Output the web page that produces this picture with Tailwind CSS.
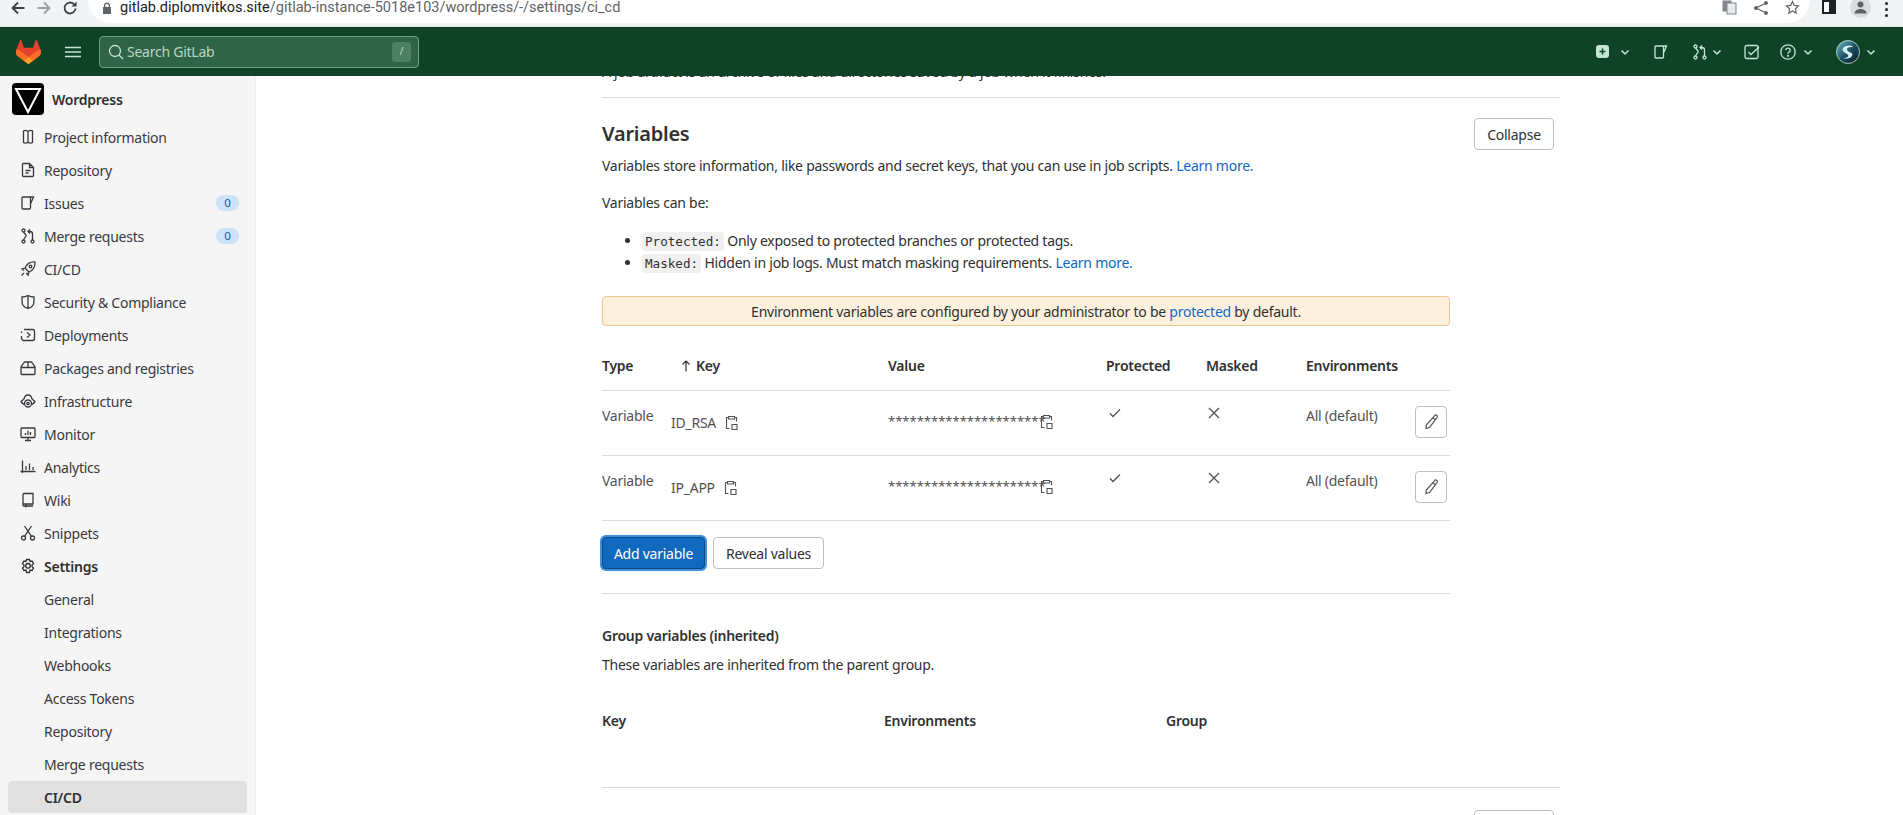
<!DOCTYPE html>
<html lang="en">
<head>
    <meta charset="UTF-8">
    <title>CI/CD Settings · Wordpress · GitLab</title>
    <script src="https://cdn.jsdelivr.net/npm/@tailwindcss/browser@4"></script>
</head>
<body class="h-[815px] overflow-hidden bg-white font-['Noto_Sans',sans-serif] text-[14px] tracking-[-0.25px] text-[#303030]">
    <!-- Browser toolbar -->
    <div class="flex h-[27px] items-start overflow-hidden bg-[#f1f3f4] border-b border-[#dfe7df]">
        <div class="flex w-[88px] items-center gap-[10px] pl-[10px] pt-0 text-[#3c4043]">
            <svg width="16" height="16" viewBox="0 0 16 16" fill="none" stroke="#3c4043" stroke-width="1.8"><path d="M14.5 8H2.5M8 2.5 2.5 8 8 13.5"/></svg>
            <svg width="16" height="16" viewBox="0 0 16 16" fill="none" stroke="#9aa0a6" stroke-width="1.8"><path d="M1.5 8h12M8 2.5 13.5 8 8 13.5"/></svg>
            <svg width="16" height="16" viewBox="0 0 16 16" fill="none" stroke="#3c4043" stroke-width="1.8"><path d="M13.5 8.5a5.5 5.5 0 1 1-1.6-4.4"/><path fill="#3c4043" stroke="none" d="M14.5 1.5v5h-5z"/></svg>
        </div>
        <div class="ml-[0px] flex h-[23px] w-[1722px] items-center rounded-b-full bg-white pl-[14px] pb-[8px] font-['Roboto',sans-serif] text-[14.5px] tracking-normal">
            <svg class="mr-[8px]" width="10" height="12" viewBox="0 0 10 12" fill="#5f6368"><path d="M2 5V3.5a3 3 0 0 1 6 0V5h1v7H1V5zm1.3 0h3.4V3.5a1.7 1.7 0 0 0-3.4 0z"/></svg>
            <span class="text-[#202124]">gitlab.diplomvitkos.site</span><span class="text-[#5f6368]">/gitlab-instance-5018e103/wordpress/-/settings/ci_cd</span>
            <div class="ml-auto mr-[0px] flex items-center gap-[17px] pr-[10px] pb-0">
                <svg width="15" height="15" viewBox="0 0 15 15"><rect x="0.5" y="0.5" width="9" height="11" fill="#80868b"/><rect x="5" y="3" width="9" height="11" fill="#e8eaed" stroke="#80868b"/></svg>
                <svg width="14" height="14" viewBox="0 0 14 14" fill="none" stroke="#5f6368" stroke-width="1.3"><path d="M12 2 2 7l10 5"/><circle cx="12" cy="2" r="1.3" fill="#5f6368"/><circle cx="2" cy="7" r="1.3" fill="#5f6368"/><circle cx="12" cy="12" r="1.3" fill="#5f6368"/></svg>
                <svg width="15" height="15" viewBox="0 0 15 15" fill="none" stroke="#5f6368" stroke-width="1.2"><path d="m7.5 1.5 1.8 3.9 4.2.5-3.1 2.9.8 4.2-3.7-2.1-3.7 2.1.8-4.2L1.5 5.9l4.2-.5z"/></svg>
            </div>
        </div>
        <div class="flex flex-1 items-start gap-[14px] pl-[12px]">
            <div class="h-[14px] w-[14px] border-[2px] border-[#202124] bg-[linear-gradient(90deg,#fff_50%,#202124_50%)]"></div>
            <div class="-mt-[3px] flex h-[21px] w-[21px] items-center justify-center rounded-full bg-[#dadce0]">
                <svg width="13" height="13" viewBox="0 0 13 13" fill="#5f6368"><circle cx="6.5" cy="3.5" r="3"/><path d="M0.5 12.5c0-3 3-4.5 6-4.5s6 1.500 6 4.500z"/></svg>
            </div>
            <div class="flex flex-col gap-[3px] pt-[2px]"><span class="h-[3px] w-[3px] rounded-full bg-[#202124]"></span><span class="h-[3px] w-[3px] rounded-full bg-[#202124]"></span><span class="h-[3px] w-[3px] rounded-full bg-[#202124]"></span></div>
        </div>
    </div>

    <!-- GitLab navbar -->
    <header class="flex h-[49px] items-center bg-[#0e4328] pl-[16px] text-[#c5e6d3]">
        <svg width="25" height="24" viewBox="0 0 25 24"><path d="m24.507 9.5-.034-.09L21.082.562a.896.896 0 0 0-1.694.091l-2.29 7.01H7.825L5.535.653a.898.898 0 0 0-1.694-.09L.451 9.411.416 9.5a6.297 6.297 0 0 0 2.09 7.278l.012.01.03.022 5.16 3.867 2.56 1.935 1.554 1.176a1.051 1.051 0 0 0 1.268 0l1.555-1.176 2.56-1.935 5.197-3.89.014-.01A6.297 6.297 0 0 0 24.507 9.5Z" fill="#E24329"/><path d="m24.507 9.5-.034-.09a11.44 11.44 0 0 0-4.56 2.051l-7.447 5.632 4.742 3.584 5.197-3.89.014-.01A6.297 6.297 0 0 0 24.507 9.5Z" fill="#FC6D26"/><path d="m7.707 20.677 2.56 1.935 1.555 1.176a1.051 1.051 0 0 0 1.268 0l1.555-1.176 2.56-1.935-4.743-3.584-4.755 3.584Z" fill="#FCA326"/><path d="M5.01 11.461a11.43 11.43 0 0 0-4.56-2.05L.416 9.5a6.297 6.297 0 0 0 2.09 7.278l.012.01.03.022 5.16 3.867 4.745-3.584-7.444-5.632Z" fill="#FC6D26"/></svg>
        <svg class="ml-[24px]" width="16" height="16" viewBox="0 0 16 16" fill="none" stroke="#c5e6d3" stroke-width="1.5"><path d="M0 3.500h16M0 8h16M0 12.500h16"/></svg>
        <div class="ml-[18px] flex h-[32px] w-[320px] items-center rounded-[4px] border border-[#6f9f84] bg-[#2f6448] pl-[8px] pr-[7px] text-[#b6d6c3]">
            <svg width="16" height="16" viewBox="0 0 16 16" fill="none" stroke="#c5e6d3" stroke-width="1.3"><circle cx="7" cy="7" r="5.5"/><path d="m11 11 4 4"/></svg>
            <span class="ml-[3px]">Search GitLab</span>
            <span class="ml-auto flex h-[20px] w-[19px] items-center justify-center rounded-[3px] bg-[#4d7f63] text-[11px]">/</span>
        </div>
        <div class="ml-auto flex items-center">
            <svg width="13" height="13" viewBox="0 0 13 13"><rect width="13" height="13" rx="3" fill="#c5e6d3"/><path d="M6.500 3.500v6M3.500 6.500h6" stroke="#0e4328" stroke-width="1.600"/></svg>
            <svg class="ml-[11px]" width="10" height="10" viewBox="0 0 10 10" fill="none" stroke="#c5e6d3" stroke-width="1.500"><path d="m1.500 3.500 3.500 3.500 3.500-3.500"/></svg>
            <svg class="ml-[23px]" width="16" height="16" viewBox="0 0 16 16" fill="none" stroke="#c5e6d3" stroke-width="1.300"><path d="M10.500 2H3a1 1 0 0 0-1 1v10a1 1 0 0 0 1 1h6.500a1 1 0 0 0 1-1V2l3 0-2.500 6"/></svg>
            <svg class="ml-[23px]" width="16" height="16" viewBox="0 0 16 16" fill="none" stroke="#c5e6d3" stroke-width="1.300"><circle cx="3.500" cy="2.500" r="1.500"/><circle cx="3.500" cy="13.500" r="1.500"/><circle cx="12.500" cy="13.500" r="1.500"/><path d="M3.500 4 6 7v1L3.500 12M12.500 12V6c0-1.500-1-2.500-2.500-2.500H8M10 1.500 8 3.500l2 2"/></svg>
            <svg class="ml-[4px]" width="10" height="10" viewBox="0 0 10 10" fill="none" stroke="#c5e6d3" stroke-width="1.500"><path d="m1.500 3.500 3.500 3.500 3.500-3.500"/></svg>
            <svg class="ml-[22px]" width="16" height="16" viewBox="0 0 16 16" fill="none" stroke="#c5e6d3" stroke-width="1.300"><rect x="1" y="1.500" width="13" height="13" rx="1.500"/><path d="m4.500 8 2.500 2.500L15 3"/></svg>
            <svg class="ml-[20px]" width="16" height="16" viewBox="0 0 16 16" fill="none" stroke="#c5e6d3" stroke-width="1.300"><circle cx="8" cy="8" r="7.200"/><path d="M5.800 6.200C5.800 5 6.800 4.200 8 4.200s2.200.8 2.200 2c0 1.800-2.200 1.700-2.200 3.500"/><circle cx="8" cy="11.800" r=".5"/></svg>
            <svg class="ml-[7px]" width="10" height="10" viewBox="0 0 10 10" fill="none" stroke="#c5e6d3" stroke-width="1.500"><path d="m1.500 3.500 3.500 3.500 3.500-3.500"/></svg>
            <svg class="ml-[23px]" width="24" height="24" viewBox="0 0 24 24"><defs><linearGradient id="av" x1="0" y1="0" x2="1" y2="1"><stop offset="0" stop-color="#6fc0cf"/><stop offset=".55" stop-color="#17495c"/><stop offset="1" stop-color="#0c1a22"/></linearGradient></defs><circle cx="12" cy="12" r="11.500" fill="url(#av)" stroke="#c5e6d3" stroke-width=".8"/><path d="M7 8c3-3 8-3 10-1-3 0-7 .5-6 3 2 3 7 2 5 6-2 3-7 3-9 2 3 0 6-1 5-3-1-2-7-3-5-7z" fill="#d6eef5"/></svg>
            <svg class="ml-[6px] mr-[27px]" width="10" height="10" viewBox="0 0 10 10" fill="none" stroke="#c5e6d3" stroke-width="1.500"><path d="m1.500 3.500 3.500 3.500 3.500-3.500"/></svg>
        </div>
    </header>

    <div class="flex h-[739px]">
        <!-- Sidebar -->
        <aside class="h-full w-[256px] shrink-0 overflow-hidden border-r border-[#ececec] bg-[#f5f5f5] pl-[8px] pr-[8px] pt-[7px] text-[#3a383f]">
            <div class="mb-[6px] flex h-[32px] items-center pl-[4px]">
                <svg width="32" height="32" viewBox="0 0 32 32"><rect width="32" height="32" rx="4" fill="#000"/><path d="M4 6h24L16 29z" fill="none" stroke="#fff" stroke-width="2"/></svg>
                <span class="ml-[8px] font-semibold text-[#303030]">Wordpress</span>
            </div>
            <nav class="flex flex-col gap-[1px]">
                <a class="flex h-[32px] items-center gap-[8px] pl-[12px]"><svg class="shrink-0" width="16" height="16" viewBox="0 0 16 16" fill="none" stroke="#3a383f" stroke-width="1.300"><path d="M8 2.500C6.500 1.500 4.500 1.300 3.500 2v11.500c1 .8 3 .7 4.500-.2zM8 2.500c1-1 2.800-1.300 4.500-.7v11.700c-1.700.7-3.500.6-4.500-.2"/></svg>Project information</a>
                <a class="flex h-[32px] items-center gap-[8px] pl-[12px]"><svg class="shrink-0" width="16" height="16" viewBox="0 0 16 16" fill="none" stroke="#3a383f" stroke-width="1.300"><path d="M9.500 1.500H3.500a1 1 0 0 0-1 1v11a1 1 0 0 0 1 1h9a1 1 0 0 0 1-1V5.500zM9.500 1.500v4h4M5.500 8.500h5M5.500 11h3"/></svg>Repository</a>
                <a class="flex h-[32px] items-center gap-[8px] pl-[12px]"><svg class="shrink-0" width="16" height="16" viewBox="0 0 16 16" fill="none" stroke="#3a383f" stroke-width="1.300"><path d="M10.500 2H3a1 1 0 0 0-1 1v10a1 1 0 0 0 1 1h6.500a1 1 0 0 0 1-1V2l3 0-2.500 6"/></svg>Issues<span class="ml-auto mr-[8px] flex h-[16px] w-[23px] items-center justify-center rounded-full bg-[#cbe2f9] text-[11.500px] text-[#0b5cad]">0</span></a>
                <a class="flex h-[32px] items-center gap-[8px] pl-[12px]"><svg class="shrink-0" width="16" height="16" viewBox="0 0 16 16" fill="none" stroke="#3a383f" stroke-width="1.300"><circle cx="3.500" cy="2.500" r="1.500"/><circle cx="3.500" cy="13.500" r="1.500"/><circle cx="12.500" cy="13.500" r="1.500"/><path d="M3.500 4 6 7v1L3.500 12M12.500 12V6c0-1.500-1-2.500-2.500-2.500H8M10 1.500 8 3.500l2 2"/></svg>Merge requests<span class="ml-auto mr-[8px] flex h-[16px] w-[23px] items-center justify-center rounded-full bg-[#cbe2f9] text-[11.500px] text-[#0b5cad]">0</span></a>
                <a class="flex h-[32px] items-center gap-[8px] pl-[12px]"><svg class="shrink-0" width="16" height="16" viewBox="0 0 16 16" fill="none" stroke="#3a383f" stroke-width="1.300"><path d="M15 1c-4.500-.3-8 1.500-10 6l4 4c4.500-2 6.300-5.500 6-10zM5 7 2 8l2 1.500M9 11l-1 3-1.500-2M4 12l-2.500 2.500"/><circle cx="10.500" cy="5.500" r="1.300"/></svg>CI/CD</a>
                <a class="flex h-[32px] items-center gap-[8px] pl-[12px]"><svg class="shrink-0" width="16" height="16" viewBox="0 0 16 16" fill="none" stroke="#3a383f" stroke-width="1.300"><path d="M8 1.500c2 1 4 1.500 6 1.500v4.500c0 3.500-2.500 6-6 7-3.500-1-6-3.500-6-7V3c2 0 4-.5 6-1.500zM8 1.500v13"/></svg>Security &amp; Compliance</a>
                <a class="flex h-[32px] items-center gap-[8px] pl-[12px]"><svg class="shrink-0" width="16" height="16" viewBox="0 0 16 16" fill="none" stroke="#3a383f" stroke-width="1.300"><path d="M4 2.500h8.500a2 2 0 0 1 2 2v7a2 2 0 0 1-2 2H4a2.500 2.500 0 0 1-2.500-2.500V9M1.500 6V4.500M7 5.500 10 8l-3 2.500"/></svg>Deployments</a>
                <a class="flex h-[32px] items-center gap-[8px] pl-[12px]"><svg class="shrink-0" width="16" height="16" viewBox="0 0 16 16" fill="none" stroke="#3a383f" stroke-width="1.300"><path d="M4.500 2h7L15 7v6.500a1 1 0 0 1-1 1H2a1 1 0 0 1-1-1V7zM1 7.500h14M8 2v5.500"/></svg>Packages and registries</a>
                <a class="flex h-[32px] items-center gap-[8px] pl-[12px]"><svg class="shrink-0" width="16" height="16" viewBox="0 0 16 16" fill="none" stroke="#3a383f" stroke-width="1.300"><path d="M4 11H3L1 8.500 4 6c.5-2.500 2-4 4-4s3.500 1.500 4 4l3 2.500L13 11h-1"/><circle cx="8" cy="10.500" r="3.500"/><circle cx="8" cy="10.500" r="1.200"/></svg>Infrastructure</a>
                <a class="flex h-[32px] items-center gap-[8px] pl-[12px]"><svg class="shrink-0" width="16" height="16" viewBox="0 0 16 16" fill="none" stroke="#3a383f" stroke-width="1.300"><rect x="1" y="2" width="14" height="9.500" rx="1"/><path d="M5 14.500h6M8 11.500v3M5.500 9V7M8 9V4.500M10.500 9V6"/></svg>Monitor</a>
                <a class="flex h-[32px] items-center gap-[8px] pl-[12px]"><svg class="shrink-0" width="16" height="16" viewBox="0 0 16 16" fill="none" stroke="#3a383f" stroke-width="1.300"><path d="M2.500 1.500V14M.5 12.500h15M6 11V7M9.500 11V4.500M13 11V8"/></svg>Analytics</a>
                <a class="flex h-[32px] items-center gap-[8px] pl-[12px]"><svg class="shrink-0" width="16" height="16" viewBox="0 0 16 16" fill="none" stroke="#3a383f" stroke-width="1.300"><path d="M3 13V2.500a1 1 0 0 1 1-1h9v10.500H4a1 1 0 0 0-1 1 1 1 0 0 0 1 1h9M6 12v3.500"/></svg>Wiki</a>
                <a class="flex h-[32px] items-center gap-[8px] pl-[12px]"><svg class="shrink-0" width="16" height="16" viewBox="0 0 16 16" fill="none" stroke="#3a383f" stroke-width="1.300"><circle cx="3.500" cy="13" r="2"/><circle cx="12.500" cy="13" r="2"/><path d="M4.500 1 11.500 11.300M11.500 1 4.500 11.300"/></svg>Snippets</a>
                <a class="flex h-[32px] items-center gap-[8px] pl-[12px] font-semibold text-[#303030]"><svg class="shrink-0" width="16" height="16" viewBox="0 0 16 16" fill="none" stroke="#303030" stroke-width="1.300"><path d="M6.500 1h3l.5 2 2-.5 1.500 2.500-1.500 1.500v1.500L13.500 9.500 12 12l-2-.5-.5 2.500h-3L6 11.500 4 12 2.500 9.500 4 8V6.500L2.500 5 4 2.500l2 .5z" transform="translate(0 .5)"/><circle cx="8" cy="7.800" r="2.300"/></svg>Settings</a>
                <a class="flex h-[32px] items-center pl-[36px]">General</a>
                <a class="flex h-[32px] items-center pl-[36px]">Integrations</a>
                <a class="flex h-[32px] items-center pl-[36px]">Webhooks</a>
                <a class="flex h-[32px] items-center pl-[36px]">Access Tokens</a>
                <a class="flex h-[32px] items-center pl-[36px]">Repository</a>
                <a class="flex h-[32px] items-center pl-[36px]">Merge requests</a>
                <a class="flex h-[32px] items-center rounded-[4px] bg-[#e1e1e1] pl-[36px] font-semibold text-[#303030]">CI/CD</a>
            </nav>
        </aside>

        <!-- Page content -->
        <main class="h-full w-[1304px] overflow-hidden pl-[346px]">
            <div class="w-[958px]">
                <p class="-mt-[14px] mb-[15px] leading-[20px]">A job artifact is an archive of files and directories saved by a job when it finishes.</p>

                <section class="border-t border-[#dcdcde]">
                    <div class="mt-[20px] flex h-[32px] items-center justify-between pr-[6px]">
                        <h2 class="text-[20px] font-semibold text-[#303030]">Variables</h2>
                        <button class="h-[32px] w-[80px] rounded-[4px] border border-[#bfbfc3] bg-white">Collapse</button>
                    </div>
                    <p class="mt-[6px] leading-[20px]">Variables store information, like passwords and secret keys, that you can use in job scripts. <a class="text-[#1068bf]">Learn more.</a></p>
                    <p class="mt-[17px] leading-[20px]">Variables can be:</p>
                    <ul class="mt-[17px] list-disc pl-[40px] leading-[21px]">
                        <li><code class="rounded-[4px] bg-[#f0f0f0] px-[3px] py-[2px] font-['DejaVu_Sans_Mono',monospace] text-[12.600px] tracking-normal">Protected:</code> Only exposed to protected branches or protected tags.</li>
                        <li><code class="rounded-[4px] bg-[#f0f0f0] px-[3px] py-[2px] font-['DejaVu_Sans_Mono',monospace] text-[12.600px] tracking-normal">Masked:</code> Hidden in job logs. Must match masking requirements. <a class="text-[#1068bf]">Learn more.</a></li>
                    </ul>

                    <div class="mt-[22px] flex h-[30px] w-[848px] items-center justify-center rounded-[4px] border border-[#e9c88c] bg-[#fdf1dd]">
                        <span>Environment variables are configured by your administrator to be <a class="text-[#1068bf]">protected</a> by default.</span>
                    </div>

                    <!-- Variables table -->
                    <div class="w-[848px]">
                        <div class="flex h-[65px] items-center border-b border-[#dcdcde] pt-[15px] font-semibold text-[#303030]">
                            <div class="w-[74px]">Type</div>
                            <div class="flex w-[212px] items-center gap-[5px] pl-[5px]"><svg width="10" height="12" viewBox="0 0 10 12" fill="none" stroke="#303030" stroke-width="1.200"><path d="M5 11.500V1M1.500 4.500 5 1l3.500 3.500"/></svg>Key</div>
                            <div class="w-[218px]">Value</div>
                            <div class="w-[100px]">Protected</div>
                            <div class="w-[100px]">Masked</div>
                            <div>Environments</div>
                        </div>
                        <div class="flex h-[65px] items-start border-b border-[#dcdcde] text-[#525252]">
                            <div class="w-[69px] pt-[14px]">Variable</div>
                            <div class="flex w-[217px] items-center gap-[9px] pt-[21px]">ID_RSA<svg width="13" height="16" viewBox="0 0 13 16" fill="none" stroke="#525252" stroke-width="1.100"><path d="M3.500 2.500h-2v11h3M9.500 2.500h2v4M3.500 1.500h6v2.500h-6zM7 9.500h5v5h-5z"/></svg></div>
                            <div class="flex w-[218px] items-center pt-[21px] text-[13px] tracking-[0px]"><span class="w-[152px]">**********************</span><svg width="13" height="16" viewBox="0 0 13 16" fill="none" stroke="#525252" stroke-width="1.100"><path d="M3.500 2.500h-2v11h3M9.500 2.500h2v4M3.500 1.500h6v2.500h-6zM7 9.500h5v5h-5z"/></svg></div>
                            <div class="w-[100px] pt-[16px] pl-[3px]"><svg width="12" height="12" viewBox="0 0 12 12" fill="none" stroke="#525252" stroke-width="1.300"><path d="m1 6.500 3 3 7-7"/></svg></div>
                            <div class="w-[100px] pt-[16px] pl-[2px]"><svg width="12" height="12" viewBox="0 0 12 12" fill="none" stroke="#525252" stroke-width="1.300"><path d="m1 1 10 10M11 1 1 11"/></svg></div>
                            <div class="w-[109px] pt-[14px]">All (default)</div>
                            <button class="mt-[15px] flex h-[32px] w-[32px] items-center justify-center rounded-[4px] border border-[#bfbfc3]"><svg width="16" height="16" viewBox="0 0 16 16" fill="none" stroke="#525252" stroke-width="1.200"><path d="M11.500 1.800a1.500 1.500 0 0 1 2.600 1.500L6.500 13.500l-3.500 1 .3-3.500zM10 4l2.500 1.700"/></svg></button>
                        </div>
                        <div class="flex h-[65px] items-start border-b border-[#dcdcde] text-[#525252]">
                            <div class="w-[69px] pt-[14px]">Variable</div>
                            <div class="flex w-[217px] items-center gap-[9px] pt-[21px]">IP_APP<svg width="13" height="16" viewBox="0 0 13 16" fill="none" stroke="#525252" stroke-width="1.100"><path d="M3.500 2.500h-2v11h3M9.500 2.500h2v4M3.500 1.500h6v2.500h-6zM7 9.500h5v5h-5z"/></svg></div>
                            <div class="flex w-[218px] items-center pt-[21px] text-[13px] tracking-[0px]"><span class="w-[152px]">**********************</span><svg width="13" height="16" viewBox="0 0 13 16" fill="none" stroke="#525252" stroke-width="1.100"><path d="M3.500 2.500h-2v11h3M9.500 2.500h2v4M3.500 1.500h6v2.500h-6zM7 9.500h5v5h-5z"/></svg></div>
                            <div class="w-[100px] pt-[16px] pl-[3px]"><svg width="12" height="12" viewBox="0 0 12 12" fill="none" stroke="#525252" stroke-width="1.300"><path d="m1 6.500 3 3 7-7"/></svg></div>
                            <div class="w-[100px] pt-[16px] pl-[2px]"><svg width="12" height="12" viewBox="0 0 12 12" fill="none" stroke="#525252" stroke-width="1.300"><path d="m1 1 10 10M11 1 1 11"/></svg></div>
                            <div class="w-[109px] pt-[14px]">All (default)</div>
                            <button class="mt-[15px] flex h-[32px] w-[32px] items-center justify-center rounded-[4px] border border-[#bfbfc3]"><svg width="16" height="16" viewBox="0 0 16 16" fill="none" stroke="#525252" stroke-width="1.200"><path d="M11.500 1.800a1.500 1.500 0 0 1 2.600 1.500L6.500 13.500l-3.500 1 .3-3.500zM10 4l2.500 1.700"/></svg></button>
                        </div>
                        <div class="mt-[16px] flex gap-[8px]">
                            <button class="h-[32px] w-[103px] rounded-[4px] border border-[#0b4a8a] bg-[#1068bf] text-white ring-2 ring-[#428fdc]">Add variable</button>
                            <button class="h-[32px] w-[111px] rounded-[4px] border border-[#bfbfc3] bg-white">Reveal values</button>
                        </div>
                    </div>

                    <div class="mt-[24px] w-[848px] border-t border-[#dcdcde]">
                        <h5 class="mt-[32px] font-semibold leading-[20px]">Group variables (inherited)</h5>
                        <p class="mt-[9px] leading-[20px]">These variables are inherited from the parent group.</p>
                        <div class="mt-[36px] flex font-semibold leading-[20px]">
                            <div class="w-[282px]">Key</div>
                            <div class="w-[282px]">Environments</div>
                            <div>Group</div>
                        </div>
                    </div>
                </section>

                <section class="mt-[56px] border-t border-[#dcdcde]">
                    <div class="mt-[22px] flex h-[32px] items-center justify-between pr-[6px]">
                        <h2 class="text-[20px] font-semibold">Pipeline triggers</h2>
                        <button class="h-[32px] w-[80px] rounded-[4px] border border-[#bfbfc3] bg-white">Collapse</button>
                    </div>
                </section>
            </div>
        </main>
    </div>
</body>
</html>
